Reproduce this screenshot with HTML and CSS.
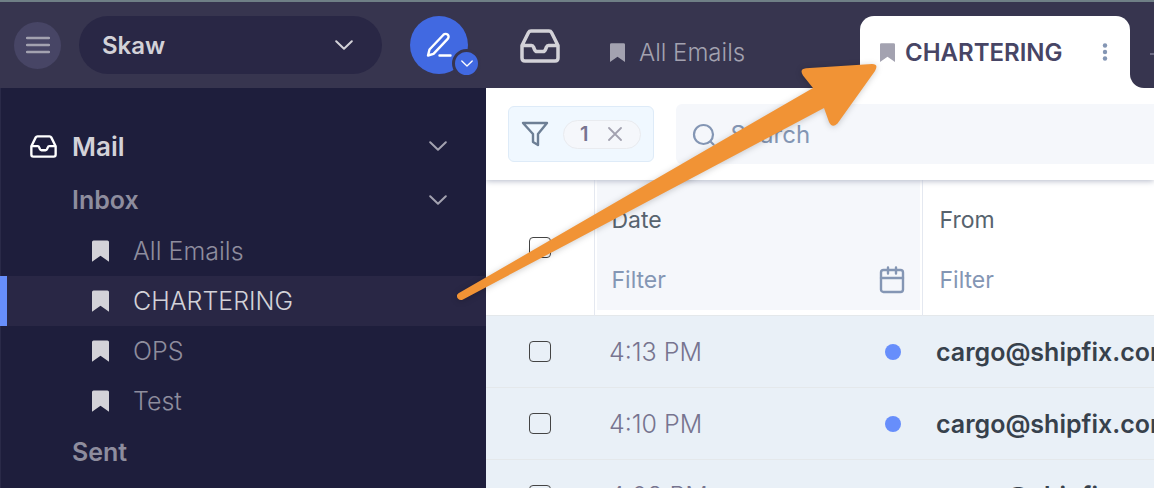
FILE: index.html
```html
<!DOCTYPE html>
<html lang="en">
<head>
<meta charset="utf-8">
<title>Mail</title>
<link rel="stylesheet" href="styles.css">
</head>
<body>
<svg class="defs" aria-hidden="true">
  <symbol id="bookmark" viewBox="0 0 16 20"><path d="M1.500 0h13a1.500 1.500 0 0 1 1.500 1.500V20l-8-5.500L0 20V1.500A1.500 1.500 0 0 1 1.500 0z" fill="currentColor"/></symbol>
  <symbol id="chevron" viewBox="0 0 18 10"><path d="M1.200 1.200L9 8.700l7.800-7.500" fill="none" stroke="currentColor" stroke-width="2" stroke-linecap="round" stroke-linejoin="round"/></symbol>
  <symbol id="tray" viewBox="0 0 40 34"><path d="M2 16.500L8.500 3.500Q9.300 2 11 2h18q1.700 0 2.500 1.500L38 16.500V29q0 3-3 3H5q-3 0-3-3zM2 16.500h9.500q1.500 0 2 1.500l1 2.500q.8 2 2.500 2h6q1.700 0 2.500-2l1-2.500q.5-1.500 2-1.500H38" fill="none" stroke="currentColor" stroke-width="3.500" stroke-linejoin="round" stroke-linecap="round"/></symbol>
</svg>
<div class="app">
  <header class="topbar">
    <div class="account">
      <button class="menu" aria-label="Menu"><svg width="24" height="18" viewBox="0 0 24 18"><path d="M1 2h22M1 9h22M1 16h22" stroke="currentColor" stroke-width="2.400" stroke-linecap="round"/></svg></button>
      <div class="picker">
        <select aria-label="Account"><option>Skaw</option></select>
        <svg class="chev"><use href="#chevron"/></svg>
      </div>
      <div class="compose">
        <button class="compose-main" aria-label="Compose"><svg width="26" height="26" viewBox="0 0 26 26" fill="none" stroke="currentColor" stroke-width="2.400" stroke-linecap="round" stroke-linejoin="round"><path d="M2 23.500l1.500-6L17.500 2.700a2.900 2.900 0 0 1 4.200 4.200L7.500 21.800zM13.500 23.500h11"/></svg></button>
        <button class="compose-more" aria-label="More compose options"><svg width="12" height="7"><use href="#chevron"/></svg></button>
      </div>
    </div>
    <nav class="tabs">
      <button class="tab-home" aria-label="Mailbox"><svg width="40" height="34"><use href="#tray"/></svg></button>
      <button class="tab"><svg class="mark"><use href="#bookmark"/></svg>All Emails</button>
      <div class="tab-active">
        <button class="tab current"><svg class="mark"><use href="#bookmark"/></svg>CHARTERING</button>
        <button class="dots" aria-label="Tab options"><svg width="6" height="18" viewBox="0 0 6 18" fill="currentColor"><circle cx="3" cy="2.500" r="2.200"/><circle cx="3" cy="9" r="2.200"/><circle cx="3" cy="15.500" r="2.200"/></svg></button>
      </div>
      <div class="tab-rest"><button class="add" aria-label="Add tab"><svg width="18" height="18" viewBox="0 0 18 18"><path d="M0 9h18M9 0v18" stroke="currentColor" stroke-width="2"/></svg></button></div>
    </nav>
  </header>
  <aside class="sidebar">
    <button class="group mail"><svg class="tray"><use href="#tray"/></svg><span>Mail</span><svg class="chev"><use href="#chevron"/></svg></button>
    <button class="group"><span>Inbox</span><svg class="chev"><use href="#chevron"/></svg></button>
    <a class="folder" href="#all"><svg class="mark"><use href="#bookmark"/></svg>All Emails</a>
    <a class="folder selected" href="#chartering"><svg class="mark"><use href="#bookmark"/></svg>CHARTERING</a>
    <a class="folder" href="#ops"><svg class="mark"><use href="#bookmark"/></svg>OPS</a>
    <a class="folder" href="#test"><svg class="mark"><use href="#bookmark"/></svg>Test</a>
    <a class="group" href="#sent"><span>Sent</span></a>
  </aside>
  <main class="content">
    <div class="toolbar">
      <div class="filters">
        <svg width="28" height="26" viewBox="0 0 28 26"><path d="M2 2h24l-9 11v11l-5-3v-8z" fill="none" stroke="currentColor" stroke-width="2.400" stroke-linejoin="round"/></svg>
        <div class="chip"><span>1</span><button aria-label="Clear filters"><svg width="14" height="14" viewBox="0 0 14 14"><path d="M1 1l12 12M13 1L1 13" stroke="currentColor" stroke-width="1.800" stroke-linecap="round"/></svg></button></div>
      </div>
      <div class="search">
        <svg width="24" height="24" viewBox="0 0 24 24" fill="none" stroke="currentColor" stroke-width="2.200" stroke-linecap="round"><circle cx="11.500" cy="12.500" r="9.500"/><path d="M18.500 19.500l3 3"/></svg>
        <input type="text" placeholder="Search" aria-label="Search">
      </div>
    </div>
    <table class="mails">
      <colgroup><col class="col-check"><col class="col-date"><col></colgroup>
      <thead>
        <tr>
          <th><input type="checkbox" aria-label="Select all"></th>
          <th class="sorted"><div class="head"><label for="f-date">Date</label><div class="field"><input type="text" id="f-date" placeholder="Filter"><svg width="26" height="28" viewBox="0 0 26 28" fill="none" stroke="currentColor" stroke-width="2.400" stroke-linecap="round"><rect x="2" y="4" width="22" height="22" rx="2.500"/><path d="M2 12h22M9 1.500v6M17 1.500v6"/></svg></div></div></th>
          <th><div class="head"><label for="f-from">From</label><div class="field"><input type="text" id="f-from" placeholder="Filter"></div></div></th>
        </tr>
      </thead>
      <tbody>
        <tr><td><input type="checkbox" aria-label="Select mail"></td><td><div class="when">4:13 PM<i class="unread"></i></div></td><td class="from">cargo@shipfix.com</td></tr>
        <tr><td><input type="checkbox" aria-label="Select mail"></td><td><div class="when">4:10 PM<i class="unread"></i></div></td><td class="from">cargo@shipfix.com</td></tr>
        <tr><td><input type="checkbox" aria-label="Select mail"></td><td><div class="when">4:08 PM<i class="unread"></i></div></td><td class="from">cargo@shipfix.com</td></tr>
      </tbody>
    </table>
  </main>
  <svg class="arrow" width="430" height="250" viewBox="454 60 430 250" aria-hidden="true"><path d="M458.500 293.300L813 88 803 75.500Q799 69 806 68.200L872 64Q879 64 875 71L837.500 123.500Q832 128.500 829 122L824 108 462.500 299.700C458 301 455 296 458.500 293.300z" fill="#f19335"/></svg>
</div>
</body>
</html>
```
FILE: styles.css
```css
* { box-sizing: border-box; }
body {
  margin: 0;
  font-family: Inter, "Liberation Sans", sans-serif;
  font-size: 24px;
  color: #37414c;
  overflow: hidden;
}
button, input, select { font: inherit; color: inherit; background: none; border: 0; padding: 0; margin: 0; }
button { display: flex; align-items: center; justify-content: center; cursor: pointer; }
a { color: inherit; text-decoration: none; }
svg { display: block; flex: none; }
.defs { position: absolute; width: 0; height: 0; }

.app {
  position: relative;
  display: grid;
  grid-template: 88px 1fr / 486px minmax(0, 1fr);
  height: 100vh;
  overflow: hidden;
}
.topbar {
  grid-column: 1 / -1;
  display: grid;
  grid-template-columns: subgrid;
  background: #37354f;
  border-top: 2px solid #6f7f86;
}
.account { display: flex; align-items: center; padding: 0 18px 0 14px; }
.menu { width: 47px; height: 47px; border-radius: 50%; background: #474565; color: #a3a2b0; }
.picker {
  flex: 1;
  display: flex;
  align-items: center;
  height: 58px;
  margin: 0 28px 0 18px;
  padding: 0 29px 0 23px;
  border-radius: 29px;
  background: #292745;
  color: #d3d2d8;
}
.picker select { flex: 1; appearance: none; font-weight: 600; outline: 0; }
.chev { width: 18px; height: 10px; }
.compose { position: relative; }
.compose-main { width: 58px; height: 58px; border-radius: 50%; background: #4169e1; color: #fff; }
.compose-more {
  position: absolute;
  right: -13px;
  bottom: -4px;
  width: 29px;
  height: 29px;
  border: 3px solid #37354f;
  border-radius: 50%;
  background: #4169e1;
  color: #fff;
}

.tabs { display: flex; align-items: stretch; padding-top: 14px; min-width: 0; }
.tab-home { padding: 0 50px 12px 34px; color: #d3d2d8; }
.tab { gap: 14px; color: #a3a2b0; font-weight: 300; white-space: nowrap; }
.mark { width: 15px; height: 19px; }
.tab-active {
  display: flex;
  justify-content: space-between;
  width: 270px;
  margin-left: auto;
  padding: 0 22px 0 20px;
  border-radius: 14px 14px 0 0;
  background: #fff;
}
.current { gap: 10px; font-weight: 600; color: #474565; }
.current .mark { color: #a3a2b0; }
.dots { color: #8496b4; }
.tab-rest { width: 24px; overflow: hidden; background: #fff; margin-top: -14px; }
.add { width: 60px; height: 100%; padding: 18px 4px 0 20px; justify-content: flex-start; border-bottom-left-radius: 14px; background: #37354f; color: #6b6982; }

.sidebar { padding-top: 30px; background: #1e1e3c; border-left: 1px solid #2a2a48; }
.group {
  display: flex;
  align-items: center;
  width: 100%;
  height: 52px;
  padding: 0 39px 0 71px;
  color: #8e8d9e;
  font-size: 25px;
  font-weight: 600;
  text-align: left;
}
.group span { flex: 1; }
.group .chev { color: #a3a2b0; }
.mail { height: 56px; gap: 15px; padding-left: 29px; color: #d3d2d8; font-size: 26px; }
.tray { width: 27px; height: 23px; color: #fff; }
.folder {
  display: flex;
  align-items: center;
  gap: 24px;
  height: 50px;
  margin-left: -1px;
  padding-left: 85px;
  border-left: 7px solid transparent;
  color: #8e8d9e;
  font-size: 25px;
  font-weight: 300;
}
.folder .mark { width: 17px; height: 22px; color: #d3d2d8; }
.selected { border-left-color: #678efb; background: #292745; color: #d3d2d8; }

.content { min-width: 0; overflow: hidden; background: #fff; }
.toolbar {
  position: relative;
  display: flex;
  align-items: center;
  gap: 22px;
  height: 92px;
  padding-left: 22px;
  box-shadow: 0 1px 6px #b4b9c8;
}
.filters {
  display: flex;
  align-items: center;
  gap: 14px;
  height: 56px;
  padding: 0 12px 0 12px;
  border: 1px solid #deebf8;
  border-radius: 6px;
  background: #f0f8ff;
  color: #6d7f95;
}
.chip {
  display: flex;
  align-items: center;
  gap: 20px;
  height: 29px;
  padding: 0 18px 0 16px;
  border: 1px solid #e9ebef;
  border-radius: 15px;
  background: #f5f7fb;
  color: #77748f;
  font-size: 20px;
  font-weight: 600;
}
.chip button { color: #a3a2b0; }
.search {
  flex: 1;
  display: flex;
  align-items: center;
  gap: 14px;
  height: 60px;
  padding-left: 16px;
  border-radius: 6px 0 0 6px;
  background: #f5f7fb;
  color: #8496b4;
}
.search input { flex: 1; min-width: 0; outline: 0; }
::placeholder { color: #8496b4; opacity: 1; }

.mails { width: 100%; table-layout: fixed; border-collapse: collapse; }
.col-check { width: 108px; }
.col-date { width: 328px; }
th, td { padding: 0; text-align: left; font-weight: 400; }
th { height: 135px; border-right: 1px solid #e4e8f0; }
th:last-child { border-right: 0; }
tbody tr { height: 72px; background: #e9f0f7; border-top: 1px solid #e4e8eb; }
input[type="checkbox"] {
  appearance: none;
  display: block;
  width: 22px;
  height: 21px;
  margin-left: 43px;
  border: 1px solid #444;
  border-radius: 4px;
}
.head { display: flex; flex-direction: column; gap: 30px; height: 130px; margin: 0 2px 5px; padding: 26px 15px 0; font-size: 23px; color: #57636e; }
.sorted .head { background: #f5f7fb; }
.field { display: flex; align-items: center; color: #8496b4; height: 32px; }
.field input { flex: 1; min-width: 0; }
.when { display: flex; align-items: center; justify-content: space-between; padding: 0 21px 0 15px; font-size: 25px; font-weight: 300; color: #77748f; }
.unread { width: 16px; height: 16px; border-radius: 50%; background: #678efb; }
.from { padding-left: 14px; font-size: 25px; font-weight: 600; white-space: nowrap; overflow: hidden; }

.arrow { position: absolute; left: 454px; top: 60px; filter: drop-shadow(0 1px 3px #0003); pointer-events: none; }
```
